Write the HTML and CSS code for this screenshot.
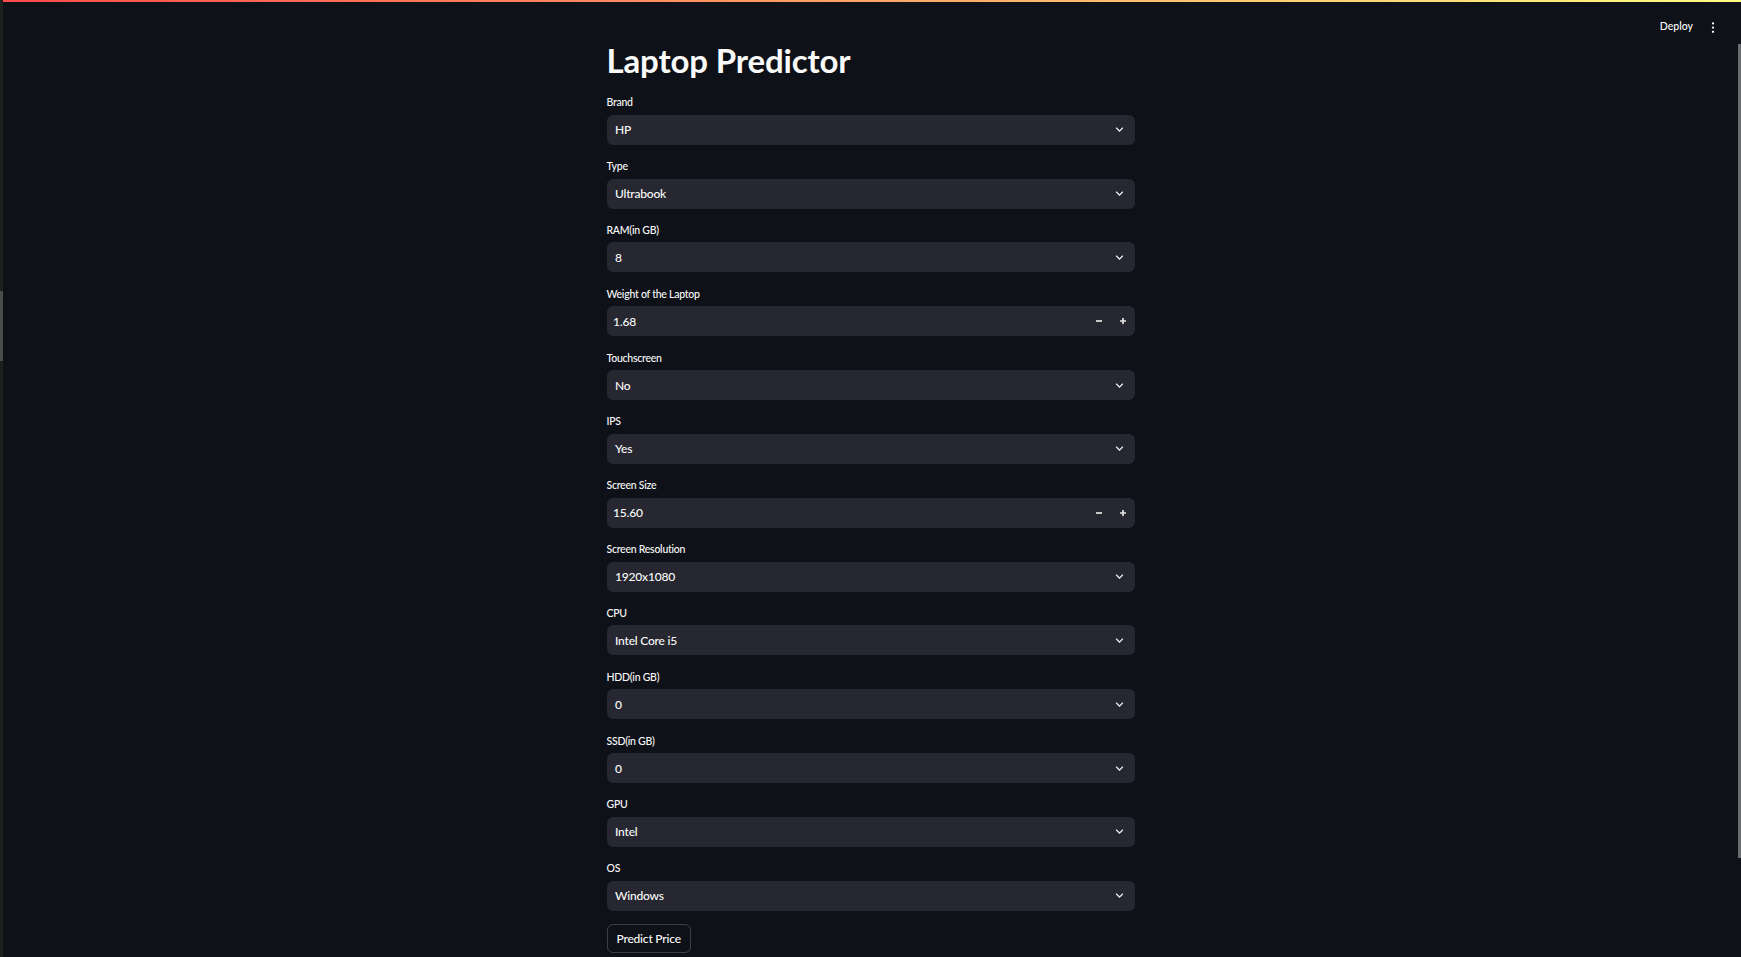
FILE: index.html
```html
<!DOCTYPE html>
<html lang="en">
<head>
<meta charset="utf-8">
<title>Laptop Predictor</title>
<link rel="stylesheet" href="styles.css">
</head>
<body>
<div class="app">
  <div class="edge-left"><div class="edge-thumb"></div></div>
  <div class="shell">
    <div class="decoration"></div>
    <div class="viewport">
      <div class="page">
        <header class="topbar">
          <span class="deploy">Deploy</span>
          <svg class="menu" width="4" height="14" viewBox="0 0 4 14"><circle cx="2" cy="3.4" r="1.15"/><circle cx="2" cy="7.6" r="1.15"/><circle cx="2" cy="11.8" r="1.15"/></svg>
        </header>
        <main class="form">
          <h1 class="title">Laptop Predictor</h1>

          <div class="field">
            <div class="label">Brand</div>
            <div class="select"><span class="value">HP</span><svg class="chev" viewBox="0 0 24 24"><path d="M7.41 8.59L12 13.17l4.59-4.58L18 10l-6 6-6-6 1.41-1.41z"/></svg></div>
          </div>

          <div class="field">
            <div class="label">Type</div>
            <div class="select"><span class="value">Ultrabook</span><svg class="chev" viewBox="0 0 24 24"><path d="M7.41 8.59L12 13.17l4.59-4.58L18 10l-6 6-6-6 1.41-1.41z"/></svg></div>
          </div>

          <div class="field">
            <div class="label">RAM(in GB)</div>
            <div class="select"><span class="value">8</span><svg class="chev" viewBox="0 0 24 24"><path d="M7.41 8.59L12 13.17l4.59-4.58L18 10l-6 6-6-6 1.41-1.41z"/></svg></div>
          </div>

          <div class="field">
            <div class="label">Weight of the Laptop</div>
            <div class="number">
              <span class="num-value">1.68</span>
              <span class="step"><svg viewBox="0 0 8 8"><path d="M1 4h6"/></svg></span>
              <span class="step"><svg viewBox="0 0 8 8"><path d="M1 4h6M4 1v6"/></svg></span>
            </div>
          </div>

          <div class="field">
            <div class="label">Touchscreen</div>
            <div class="select"><span class="value">No</span><svg class="chev" viewBox="0 0 24 24"><path d="M7.41 8.59L12 13.17l4.59-4.58L18 10l-6 6-6-6 1.41-1.41z"/></svg></div>
          </div>

          <div class="field">
            <div class="label">IPS</div>
            <div class="select"><span class="value">Yes</span><svg class="chev" viewBox="0 0 24 24"><path d="M7.41 8.59L12 13.17l4.59-4.58L18 10l-6 6-6-6 1.41-1.41z"/></svg></div>
          </div>

          <div class="field">
            <div class="label">Screen Size</div>
            <div class="number">
              <span class="num-value">15.60</span>
              <span class="step"><svg viewBox="0 0 8 8"><path d="M1 4h6"/></svg></span>
              <span class="step"><svg viewBox="0 0 8 8"><path d="M1 4h6M4 1v6"/></svg></span>
            </div>
          </div>

          <div class="field">
            <div class="label">Screen Resolution</div>
            <div class="select"><span class="value">1920x1080</span><svg class="chev" viewBox="0 0 24 24"><path d="M7.41 8.59L12 13.17l4.59-4.58L18 10l-6 6-6-6 1.41-1.41z"/></svg></div>
          </div>

          <div class="field">
            <div class="label">CPU</div>
            <div class="select"><span class="value">Intel Core i5</span><svg class="chev" viewBox="0 0 24 24"><path d="M7.41 8.59L12 13.17l4.59-4.58L18 10l-6 6-6-6 1.41-1.41z"/></svg></div>
          </div>

          <div class="field">
            <div class="label">HDD(in GB)</div>
            <div class="select"><span class="value">0</span><svg class="chev" viewBox="0 0 24 24"><path d="M7.41 8.59L12 13.17l4.59-4.58L18 10l-6 6-6-6 1.41-1.41z"/></svg></div>
          </div>

          <div class="field">
            <div class="label">SSD(in GB)</div>
            <div class="select"><span class="value">0</span><svg class="chev" viewBox="0 0 24 24"><path d="M7.41 8.59L12 13.17l4.59-4.58L18 10l-6 6-6-6 1.41-1.41z"/></svg></div>
          </div>

          <div class="field">
            <div class="label">GPU</div>
            <div class="select"><span class="value">Intel</span><svg class="chev" viewBox="0 0 24 24"><path d="M7.41 8.59L12 13.17l4.59-4.58L18 10l-6 6-6-6 1.41-1.41z"/></svg></div>
          </div>

          <div class="field">
            <div class="label">OS</div>
            <div class="select"><span class="value">Windows</span><svg class="chev" viewBox="0 0 24 24"><path d="M7.41 8.59L12 13.17l4.59-4.58L18 10l-6 6-6-6 1.41-1.41z"/></svg></div>
          </div>

          <button class="predict" type="button">Predict Price</button>
        </main>
      </div>
      <div class="edge-right"><div class="edge-right-thumb"></div></div>
    </div>
  </div>
</div>
</body>
</html>
```
FILE: styles.css
```css
html, body {
  margin: 0;
  padding: 0;
  height: 100%;
  overflow: hidden;
  background: #0e1117;
}

body {
  font-family: Lato, "Liberation Sans", sans-serif;
  color: #fafafa;
}

.app {
  display: flex;
  height: 957px;
}

.edge-left {
  width: 3px;
  flex: 0 0 3px;
  background: #1e201d;
}

.edge-thumb {
  margin-top: 291px;
  height: 70px;
  background: #4b4c4c;
}

.shell {
  flex: 1;
  display: flex;
  flex-direction: column;
  min-width: 0;
}

.decoration {
  height: 2px;
  flex: 0 0 2px;
  background: linear-gradient(90deg, #ff4b4b, #fffd80);
}

.viewport {
  flex: 1;
  display: flex;
  min-height: 0;
}

.page {
  flex: 1;
  display: flex;
  flex-direction: column;
  min-width: 0;
}

.edge-right {
  width: 3px;
  flex: 0 0 3px;
}

.edge-right-thumb {
  margin-top: 42px;
  height: 814px;
  background: #6a6c70;
}

.topbar {
  height: 39.4px;
  box-sizing: border-box;
  padding-top: 17.6px;
  padding-right: 23px;
  display: flex;
  justify-content: flex-end;
  align-items: flex-start;
  gap: 18px;
}

.deploy {
  font-size: 10.5px;
  line-height: 12.6px;
  font-weight: 500;
  color: #fafafa;
}

.menu {
  fill: #fafafa;
}

.form {
  width: 528px;
  margin: 0 auto;
  display: flex;
  flex-direction: column;
  gap: 12.33px;
}

.title {
  margin: 0;
  font-size: 33px;
  line-height: 39.6px;
  font-weight: 700;
  letter-spacing: -0.15px;
  color: #fafafa;
}

.field {
  display: flex;
  flex-direction: column;
}

.label {
  font-size: 10.5px;
  line-height: 18px;
  margin-bottom: 3.5px;
  font-weight: 500;
  letter-spacing: -0.25px;
  color: #fafafa;
}

.select {
  height: 30px;
  box-sizing: border-box;
  background: #262730;
  border-radius: 6px;
  display: flex;
  align-items: center;
  padding: 0 7.3px 0 8.5px;
}

.value {
  flex: 1;
  font-size: 12px;
  font-weight: 500;
  letter-spacing: -0.2px;
  color: #fafafa;
}

.chev {
  width: 15px;
  height: 15px;
  fill: #f0f0f0;
}

.number {
  height: 30px;
  box-sizing: border-box;
  background: #262730;
  border-radius: 6px;
  display: flex;
  align-items: center;
  padding-left: 6.5px;
}

.num-value {
  flex: 1;
  font-size: 12px;
  font-weight: 500;
  letter-spacing: -0.2px;
  color: #fafafa;
}

.step {
  width: 24px;
  height: 30px;
  display: flex;
  align-items: center;
  justify-content: center;
}

.step svg {
  width: 8px;
  height: 8px;
  stroke: #e4e4e4;
  stroke-width: 1.7;
  fill: none;
}

.predict {
  align-self: flex-start;
  margin-top: 1px;
  height: 28.5px;
  padding: 0 9px;
  background: transparent;
  border: 1px solid rgba(250, 250, 250, 0.2);
  border-radius: 6px;
  font-family: Lato, "Liberation Sans", sans-serif;
  font-size: 12px;
  font-weight: 500;
  letter-spacing: -0.2px;
  color: #fafafa;
}
```
